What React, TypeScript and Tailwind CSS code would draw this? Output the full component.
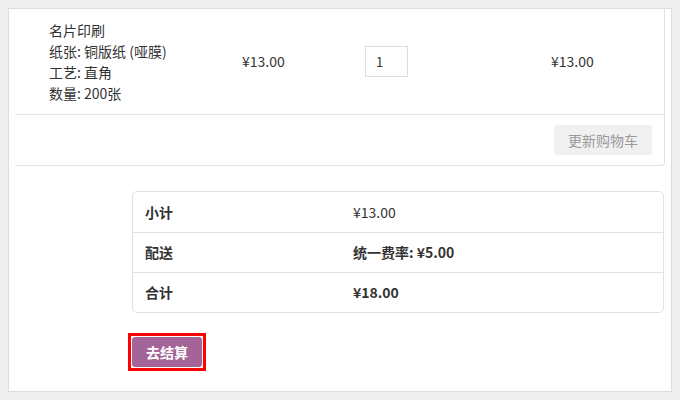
import React from 'react';

const font = { fontFamily: '"Noto Sans CJK SC", "Noto Sans", sans-serif' };

const productLines = ['名片印刷', '纸张: 铜版纸 (哑膜)', '工艺: 直角', '数量: 200张'];

const totals = [
  { label: '小计', value: '¥13.00', bold: false },
  { label: '配送', value: '统一费率: ¥5.00', bold: true },
  { label: '合计', value: '¥18.00', bold: true },
];

const App: React.FC = () => {
  return (
    <div className="w-[680px] h-[400px] bg-[#eeeeee] p-2 text-[14px] text-[#333333]" style={font}>
      <div className="h-[384px] bg-white border border-[#dddddd] px-[6px]">
        {/* cart table */}
        <div className="border-r border-b border-[#e2e2e2] rounded-br-[4px]">
          <div className="flex items-center h-[106px] border-b border-[#e2e2e2]">
            <div className="w-[227px] pl-[34px] leading-[21px]">
              {productLines.map(line => (
                <div key={line}>{line}</div>
              ))}
            </div>
            <div className="w-[123px]">¥13.00</div>
            <div className="w-[186px]">
              <input
                readOnly
                value="1"
                className="w-[43px] h-[31px] border border-[#dddddd] pl-[10px] text-[13px] outline-none"
              />
            </div>
            <div>¥13.00</div>
          </div>
          <div className="flex justify-end h-[50px] pt-[10px] pr-[12px]">
            <button className="w-[98px] h-[30px] bg-[#f0f0f0] rounded-[3px] text-[#9a9a9a] text-[14px]">
              更新购物车
            </button>
          </div>
        </div>

        {/* cart totals */}
        <div className="ml-[117px] mr-[1px] mt-[25px] border border-[#e2e2e2] rounded-[5px]">
          {totals.map((row, i) => (
            <div
              key={row.label}
              className={`flex items-center h-[40px] ${i > 0 ? 'border-t border-[#e2e2e2]' : ''}`}
            >
              <div className="w-[220px] pl-[12px] font-bold">{row.label}</div>
              <div className={row.bold ? 'font-bold' : ''}>{row.value}</div>
            </div>
          ))}
        </div>

        <div className="ml-[113px] mt-[20px] inline-block border-[3px] border-[#ff0000] p-[1px] bg-white">
          <button className="block w-[70px] h-[30px] bg-[#a46497] rounded-[3px] text-white font-bold text-[14px]">
            去结算
          </button>
        </div>
      </div>
    </div>
  );
};

export default App;
